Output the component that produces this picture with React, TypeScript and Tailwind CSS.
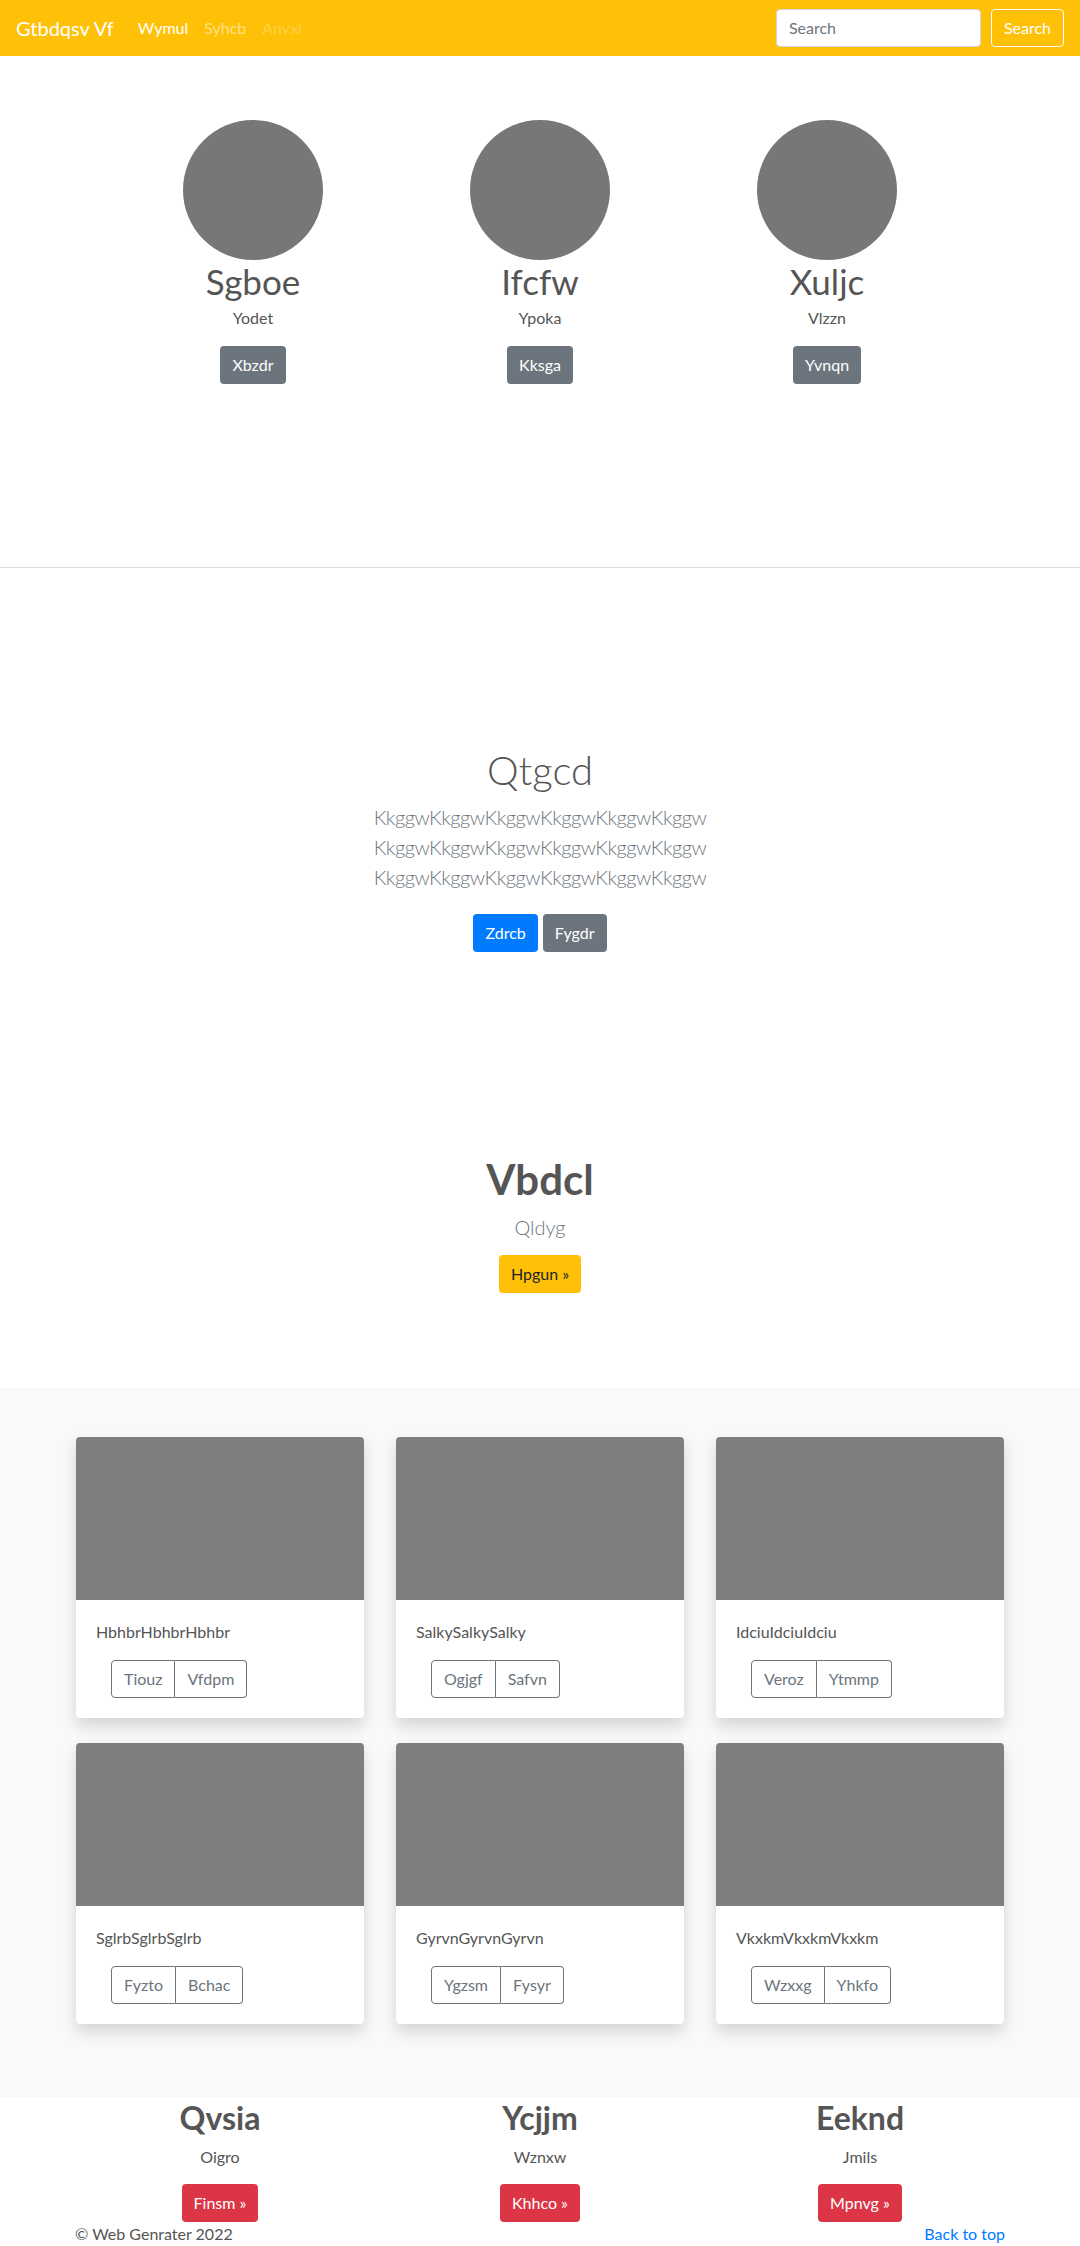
import React from 'react';

const font = { fontFamily: 'Lato, "Open Sans", sans-serif' };

const team = [
  { name: 'Sgboe', role: 'Yodet', btn: 'Xbzdr' },
  { name: 'Ifcfw', role: 'Ypoka', btn: 'Kksga' },
  { name: 'Xuljc', role: 'Vlzzn', btn: 'Yvnqn' },
];

const cards = [
  { text: 'HbhbrHbhbrHbhbr', a: 'Tiouz', b: 'Vfdpm' },
  { text: 'SalkySalkySalky', a: 'Ogjgf', b: 'Safvn' },
  { text: 'IdciuIdciuIdciu', a: 'Veroz', b: 'Ytmmp' },
  { text: 'SglrbSglrbSglrb', a: 'Fyzto', b: 'Bchac' },
  { text: 'GyrvnGyrvnGyrvn', a: 'Ygzsm', b: 'Fysyr' },
  { text: 'VkxkmVkxkmVkxkm', a: 'Wzxxg', b: 'Yhkfo' },
];

const features = [
  { title: 'Qvsia', sub: 'Oigro', btn: 'Finsm »' },
  { title: 'Ycjjm', sub: 'Wznxw', btn: 'Khhco »' },
  { title: 'Eeknd', sub: 'Jmils', btn: 'Mpnvg »' },
];

function Navbar() {
  return (
    <nav className="h-14 bg-[#ffc107] flex items-center px-4">
      <span className="text-white text-[20px] mr-4">Gtbdqsv Vf</span>
      <div className="flex items-center text-base">
        <span className="px-2 text-white">Wymul</span>
        <span className="px-2 text-[#ffe083]">Syhcb</span>
        <span className="px-2 text-[#ffd045]">Anvxl</span>
      </div>
      <div className="ml-auto flex items-center gap-[10px]">
        <div className="w-[205px] h-[38px] bg-white border border-[#ced4da] rounded flex items-center px-3 text-[#6c757d]">
          Search
        </div>
        <button className="h-[38px] px-3 border border-white rounded text-white">Search</button>
      </div>
    </nav>
  );
}

export default function App() {
  return (
    <div className="min-h-screen bg-white text-[#555]" style={font}>
      <Navbar />

      {/* --- Team --- */}
      <section className="pt-16 h-[511px]">
        <div className="w-[861px] mx-auto grid grid-cols-3">
          {team.map((t) => (
            <div key={t.name} className="flex flex-col items-center">
              <div className="w-[140px] h-[140px] rounded-full bg-[#777777]" />
              <h2 className="text-[35px] leading-[42px]">{t.name}</h2>
              <p className="mt-1 leading-6">{t.role}</p>
              <button className="mt-4 h-[38px] px-3 rounded bg-[#6c757d] text-white">{t.btn}</button>
            </div>
          ))}
        </div>
      </section>
      <hr className="border-t border-[#dedede]" />

      {/* --- Jumbotron --- */}
      <section className="pt-[178px] text-center">
        <h1 className="text-[40px] leading-[48px] font-light">Qtgcd</h1>
        <p className="mt-2 text-[20px] leading-[30px] font-light tracking-[-0.45px] text-[#6c757d]">
          KkggwKkggwKkggwKkggwKkggwKkggw
          <br />
          KkggwKkggwKkggwKkggwKkggwKkggw
          <br />
          KkggwKkggwKkggwKkggwKkggwKkggw
        </p>
        <div className="mt-[22px] flex justify-center gap-[5px]">
          <button className="h-[38px] px-3 rounded bg-[#007bff] text-white">Zdrcb</button>
          <button className="h-[38px] px-3 rounded bg-[#6c757d] text-white">Fygdr</button>
        </div>
      </section>

      {/* --- Callout --- */}
      <section className="pt-[202px] pb-[95px] text-center">
        <h2 className="text-[42px] leading-[50px] font-bold">Vbdcl</h2>
        <p className="mt-2 text-[20px] leading-[30px] font-light text-[#6c757d]">Qldyg</p>
        <button className="mt-[13px] h-[38px] px-3 rounded bg-[#ffc107] text-[#212529]">Hpgun »</button>
      </section>

      {/* --- Album --- */}
      <section className="bg-[#f8f9fa] pt-[49px] pb-[73px]">
        <div className="w-[928px] mx-auto grid grid-cols-3 gap-x-8 gap-y-[25px]">
          {cards.map((c) => (
            <div key={c.text} className="bg-white rounded overflow-hidden shadow-[0_8px_16px_rgba(0,0,0,0.15)]">
              <div className="h-[163px] bg-[#7f7f7f]" />
              <div className="p-5">
                <p className="leading-6">{c.text}</p>
                <div className="mt-4 ml-[15px] flex">
                  <button className="h-[38px] px-3 border border-[#6c757d] rounded-l text-[#6c757d]">{c.a}</button>
                  <button className="h-[38px] px-3 border border-l-0 border-[#6c757d] rounded-r text-[#6c757d]">{c.b}</button>
                </div>
              </div>
            </div>
          ))}
        </div>
      </section>

      {/* --- Features --- */}
      <section className="pt-[2px]">
        <div className="w-[960px] mx-auto grid grid-cols-3">
          {features.map((f) => (
            <div key={f.title} className="flex flex-col items-center">
              <h2 className="text-[32px] leading-[38px] font-bold">{f.title}</h2>
              <p className="mt-2 leading-6">{f.sub}</p>
              <button className="mt-[15px] h-[38px] px-3 rounded bg-[#dc3545] text-white">{f.btn}</button>
            </div>
          ))}
        </div>
      </section>

      <footer className="w-[930px] mx-auto flex justify-between leading-6 pb-4">
        <p>© Web Genrater 2022</p>
        <a className="text-[#007bff]">Back to top</a>
      </footer>
    </div>
  );
}
